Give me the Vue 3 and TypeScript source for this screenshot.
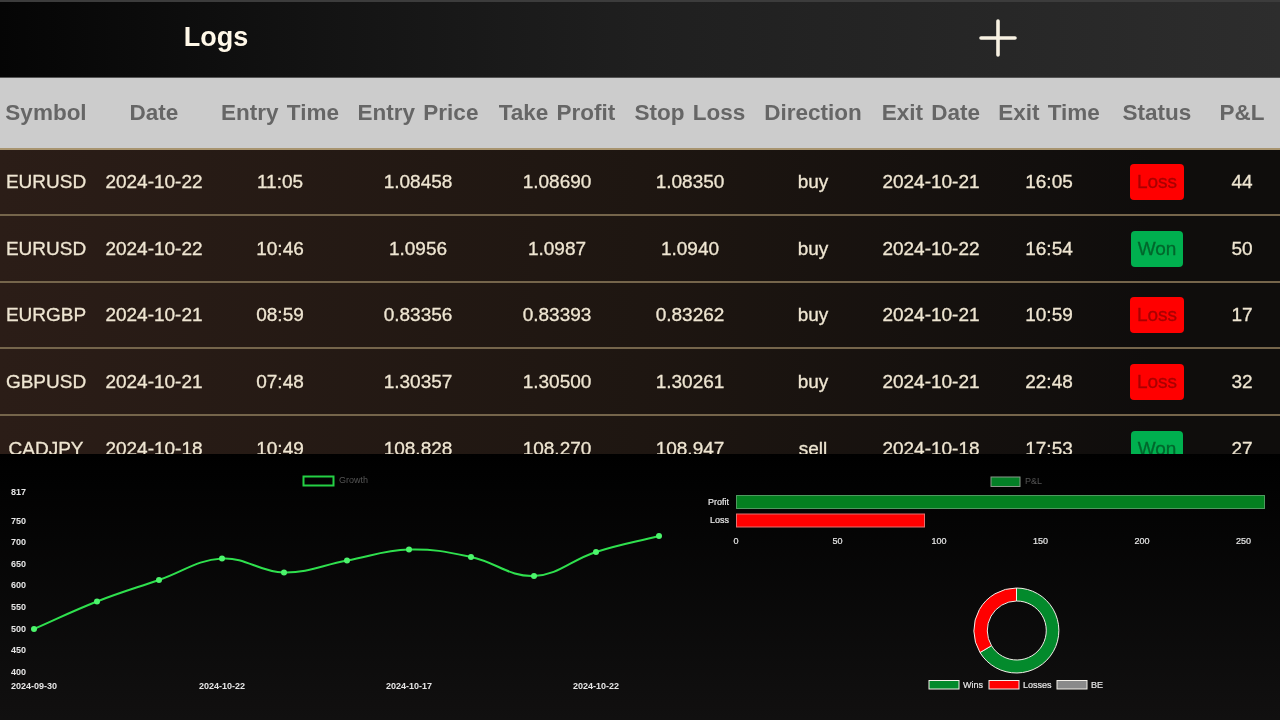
<script setup lang="ts">
type Trade = {
  symbol: string;
  date: string;
  entryTime: string;
  entryPrice: string;
  takeProfit: string;
  stopLoss: string;
  direction: string;
  exitDate: string;
  exitTime: string;
  status: "Won" | "Loss";
  pnl: number;
};

const columns = [
  "Symbol",
  "Date",
  "Entry Time",
  "Entry Price",
  "Take Profit",
  "Stop Loss",
  "Direction",
  "Exit Date",
  "Exit Time",
  "Status",
  "P&L",
];

const trades: Trade[] = [
  { symbol: "EURUSD", date: "2024-10-22", entryTime: "11:05", entryPrice: "1.08458", takeProfit: "1.08690", stopLoss: "1.08350", direction: "buy", exitDate: "2024-10-21", exitTime: "16:05", status: "Loss", pnl: 44 },
  { symbol: "EURUSD", date: "2024-10-22", entryTime: "10:46", entryPrice: "1.0956", takeProfit: "1.0987", stopLoss: "1.0940", direction: "buy", exitDate: "2024-10-22", exitTime: "16:54", status: "Won", pnl: 50 },
  { symbol: "EURGBP", date: "2024-10-21", entryTime: "08:59", entryPrice: "0.83356", takeProfit: "0.83393", stopLoss: "0.83262", direction: "buy", exitDate: "2024-10-21", exitTime: "10:59", status: "Loss", pnl: 17 },
  { symbol: "GBPUSD", date: "2024-10-21", entryTime: "07:48", entryPrice: "1.30357", takeProfit: "1.30500", stopLoss: "1.30261", direction: "buy", exitDate: "2024-10-21", exitTime: "22:48", status: "Loss", pnl: 32 },
  { symbol: "CADJPY", date: "2024-10-18", entryTime: "10:49", entryPrice: "108.828", takeProfit: "108.270", stopLoss: "108.947", direction: "sell", exitDate: "2024-10-18", exitTime: "17:53", status: "Won", pnl: 27 },
];

const growthPoints: [number, number][] = [
  [34, 629], [97, 601.5], [159, 580], [222, 558.5], [284, 572.5], [347, 560.5],
  [409, 549.5], [471, 557], [534, 576], [596, 552], [659, 536],
];

const yTicks = [
  { label: "817", y: 492 }, { label: "750", y: 521 }, { label: "700", y: 542 },
  { label: "650", y: 564 }, { label: "600", y: 585 }, { label: "550", y: 607 },
  { label: "500", y: 629 }, { label: "450", y: 650 }, { label: "400", y: 672 },
];

const xTicks = [
  { label: "2024-09-30", x: 34 }, { label: "2024-10-22", x: 222 },
  { label: "2024-10-17", x: 409 }, { label: "2024-10-22", x: 596 },
];

const barTicks = [0, 50, 100, 150, 200, 250].map((v) => ({ label: v, x: 736 + v * 2.03 }));

const donutLegend = [
  { label: "Wins", x: 929, fill: "#038a2c" },
  { label: "Losses", x: 989, fill: "#ff0000" },
  { label: "BE", x: 1057, fill: "#8a8a8a" },
];

// same curve as a chart line with tension 0.4
function smoothPath(pts: [number, number][], t = 0.4): string {
  const ctrl = pts.map((p, i) => {
    const prev = pts[Math.max(i - 1, 0)];
    const next = pts[Math.min(i + 1, pts.length - 1)];
    const d01 = Math.hypot(p[0] - prev[0], p[1] - prev[1]);
    const d12 = Math.hypot(next[0] - p[0], next[1] - p[1]);
    const sum = d01 + d12 || 1;
    const fa = (t * d01) / sum;
    const fb = (t * d12) / sum;
    return {
      inX: p[0] - fa * (next[0] - prev[0]),
      inY: p[1] - fa * (next[1] - prev[1]),
      outX: p[0] + fb * (next[0] - prev[0]),
      outY: p[1] + fb * (next[1] - prev[1]),
    };
  });
  let d = `M${pts[0][0]} ${pts[0][1]}`;
  for (let i = 1; i < pts.length; i++) {
    d += ` C${ctrl[i - 1].outX} ${ctrl[i - 1].outY} ${ctrl[i].inX} ${ctrl[i].inY} ${pts[i][0]} ${pts[i][1]}`;
  }
  return d;
}

const growthPath = smoothPath(growthPoints);
</script>

<template>
  <main class="page">
    <header class="topbar">
      <h1>Logs</h1>
      <button class="add" type="button" aria-label="Add log">
        <svg width="38" height="38" viewBox="0 0 38 38">
          <path d="M19 2V36M2 19H36" stroke="#f7f1e2" stroke-width="3.6" stroke-linecap="round" />
        </svg>
      </button>
    </header>

    <section class="logs">
      <div class="row head">
        <div v-for="col in columns" :key="col">{{ col }}</div>
      </div>
      <div v-for="(t, i) in trades" :key="i" class="row body">
        <div>{{ t.symbol }}</div>
        <div>{{ t.date }}</div>
        <div>{{ t.entryTime }}</div>
        <div>{{ t.entryPrice }}</div>
        <div>{{ t.takeProfit }}</div>
        <div>{{ t.stopLoss }}</div>
        <div>{{ t.direction }}</div>
        <div>{{ t.exitDate }}</div>
        <div>{{ t.exitTime }}</div>
        <div><span class="badge" :class="t.status === 'Won' ? 'won' : 'loss'">{{ t.status }}</span></div>
        <div>{{ t.pnl }}</div>
      </div>
    </section>

    <section class="charts">
      <svg class="chart" width="680" height="266" viewBox="0 454 680 266">
        <rect x="303.5" y="476.5" width="30" height="9" fill="none" stroke="#24d044" stroke-width="2" />
        <text class="legend" x="339" y="483">Growth</text>
        <text v-for="t in yTicks" :key="t.label" class="tick" x="11" :y="t.y + 3">{{ t.label }}</text>
        <text v-for="t in xTicks" :key="t.x" class="tick" :x="t.x" y="689" text-anchor="middle">{{ t.label }}</text>
        <path :d="growthPath" fill="none" stroke="#2fe04e" stroke-width="2" />
        <circle v-for="p in growthPoints" :key="p[0]" :cx="p[0]" :cy="p[1]" r="3" fill="#4cf56c" />
      </svg>

      <div class="right">
        <svg class="chart" width="600" height="120" viewBox="680 454 600 120">
          <rect x="991" y="477" width="29" height="9.5" fill="#038026" stroke="#8a9a8a" />
          <text class="legend" x="1025" y="484">P&amp;L</text>
          <text class="tick plain" x="729" y="505" text-anchor="end">Profit</text>
          <text class="tick plain" x="729" y="523" text-anchor="end">Loss</text>
          <rect x="736.5" y="495.5" width="528" height="13" fill="#048020" stroke="#4f9a5f" />
          <rect x="736.5" y="514" width="188" height="13" fill="#ff0000" stroke="#e47070" />
          <text v-for="t in barTicks" :key="t.label" class="tick plain" :x="t.x" y="544" text-anchor="middle">{{ t.label }}</text>
        </svg>

        <svg class="chart" width="600" height="146" viewBox="680 574 600 146">
          <!-- wins from 12 o'clock clockwise, losses back to 12 -->
          <path
            d="M1016.5 588 A42.5 42.5 0 1 1 980 652.5 L991.5 645.7 A29.5 29.5 0 1 0 1016.5 601 Z"
            fill="#038a2c"
            stroke="#f2efe8"
            stroke-width="1"
          />
          <path
            d="M1016.5 588 A42.5 42.5 0 0 0 980 652.5 L991.5 645.7 A29.5 29.5 0 0 1 1016.5 601 Z"
            fill="#ff0000"
            stroke="#f2efe8"
            stroke-width="1"
          />
          <g v-for="l in donutLegend" :key="l.label">
            <rect :x="l.x" y="680.5" width="30" height="8.5" :fill="l.fill" stroke="#f2efe8" />
            <text class="tick plain" :x="l.x + 34" y="688">{{ l.label }}</text>
          </g>
        </svg>
      </div>
    </section>
  </main>
</template>

<style scoped>
.page {
  display: flex;
  flex-direction: column;
  width: 1280px;
  height: 720px;
  overflow: hidden;
  font-family: "Liberation Sans", Arial, sans-serif;
  filter: blur(0.35px);
}

.topbar {
  display: flex;
  align-items: center;
  flex: none;
  height: 78px;
  box-sizing: border-box;
  padding-bottom: 4px;
  border-top: 2px solid #3c3c3c;
  border-bottom: 1px solid #555;
  background: linear-gradient(90deg, #050505, #131313 25%, #1f1f1f 50%, #2d2d2d);
}

h1 {
  width: 432px;
  margin: 0;
  color: #fff8e8;
  font-size: 27px;
  font-weight: 700;
  text-align: center;
}

.add {
  display: flex;
  margin-left: 547px;
  padding: 0;
  border: 0;
  background: none;
}

.logs {
  flex: none;
  height: 376px;
  overflow: hidden;
  background: linear-gradient(90deg, #2b1d17, #1e1611 50%, #0f0d0c 90%);
}

.row {
  display: grid;
  grid-template-columns: 92px 124px 128px 148px 130px 136px 110px 126px 110px 106px 64px 6px;
  align-items: center;
  box-sizing: border-box;
  text-align: center;
}

.head {
  height: 71.5px;
  border-bottom: 2px solid #a8946f;
  background: #cccccc;
  color: #666666;
  font-size: 22.5px;
  font-weight: 700;
  word-spacing: 2px;
}

.body {
  height: 66.6px;
  padding-top: 1px;
  border-bottom: 2px solid #75654b;
  color: #efe6d2;
  font-size: 19px;
  -webkit-text-stroke: 0.3px currentColor;
}

.badge {
  display: inline-block;
  padding: 0 7px;
  border-radius: 4px;
  line-height: 36px;
}

.loss {
  background: #ff0000;
  color: #a80000;
}

.won {
  background: #00b04f;
  color: #00662c;
}

.charts {
  display: flex;
  flex: 1;
  background: linear-gradient(180deg, #000000, #111010);
}

.chart {
  display: block;
}

.tick {
  fill: #e6e6e6;
  font-size: 9px;
  font-weight: 700;
}

.plain {
  font-weight: 400;
  stroke: #e6e6e6;
  stroke-width: 0.2px;
}

.legend {
  fill: #555555;
  font-size: 9px;
}
</style>

<style>
html,
body {
  background: #000;
}
</style>
